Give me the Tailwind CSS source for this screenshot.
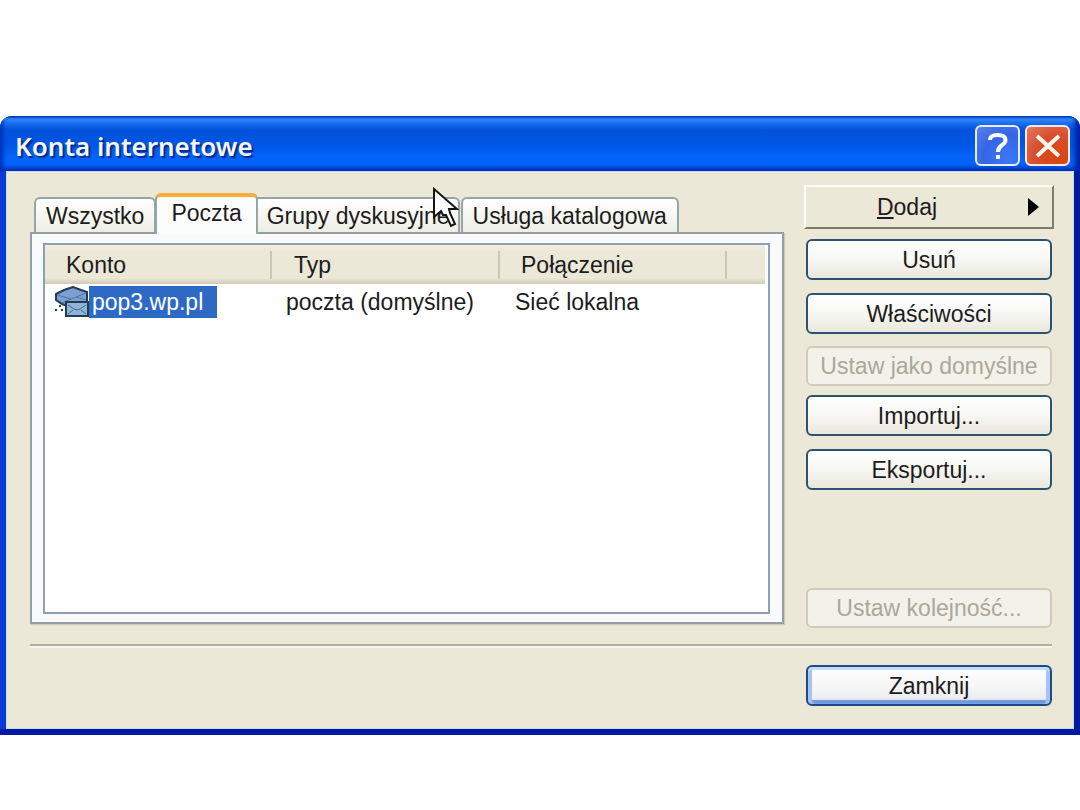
<!DOCTYPE html>
<html lang="pl">
<head>
<meta charset="utf-8">
<meta name="viewport" content="width=device-width, initial-scale=1">
<title>Konta internetowe</title>
<script src="https://cdn.jsdelivr.net/npm/@tailwindcss/browser@4"></script>
</head>
<body class="bg-white pt-[116px] font-['Liberation_Sans',Arial,sans-serif] text-[23px] leading-7 text-[#1c1c20]">
<main class="w-full overflow-hidden rounded-t-[12px] bg-[linear-gradient(90deg,#0a3ad6_0%,#0a3ad6_50%,#001a9c_50%)]">
  <header class="flex h-[55px] items-center justify-between bg-[linear-gradient(180deg,#0a50d8_0%,#3d95ff_5%,#1a72f5_12%,#0553dd_24%,#0055e2_50%,#0364fb_75%,#0362fa_88%,#0148d0_96%,#0538b0_100%)] pt-1 pr-[10px] pl-[15px] shadow-[inset_3px_0_4px_#0030b8,inset_-5px_0_5px_#0022a0]">
    <h1 class="font-['Noto_Sans','Open_Sans',sans-serif] text-[26px] leading-8 font-semibold text-[#f4f6ff] [text-shadow:2px_2px_1px_#0a2a8c]">Konta internetowe</h1>
    <div class="flex gap-[5px]">
      <button aria-label="Pomoc" class="flex h-[41px] w-[45px] items-center justify-center rounded-[6px] border-2 border-[#e8eeff] bg-[radial-gradient(circle_at_75%_85%,#3a78f8,#3565e6_55%,#5b80ea)]">
        <svg class="h-[30px] w-[26px]" viewBox="0 0 26 30" fill="none" stroke="#fff" stroke-width="4"><path d="M5 9Q5 4 12.500 4Q20.500 4 20.500 9Q20.500 12 16.500 14.500Q13 17 13 21"/><path d="M11 26H15"/></svg>
      </button>
      <button aria-label="Zamknij okno" class="flex h-[41px] w-[45px] items-center justify-center rounded-[6px] border-2 border-[#ffe9e2] bg-[radial-gradient(circle_at_75%_85%,#d84510,#d84f2c_55%,#e27a60)]">
        <svg class="h-[26px] w-[28px]" viewBox="0 0 28 26" fill="none" stroke="#fff6ee" stroke-width="4"><path d="M3 3L25 23M25 3L3 23"/></svg>
      </button>
    </div>
  </header>

  <div class="mx-[6px] bg-[#ebe8d7] pr-[22px] pb-[23px] pl-6 shadow-[inset_1px_1px_0_#c9daf5,inset_-1px_-1px_0_#c9daf5]">
    <div class="flex gap-[22px]">
      <section class="flex min-w-0 flex-1 flex-col pt-[22px] pb-1">
        <div role="tablist" class="flex items-end pl-1">
          <button role="tab" class="h-[35px] rounded-t-[6px] border-2 border-b-0 border-[#97a5a8] bg-linear-to-b from-white to-[#efeee4] px-[10px] whitespace-nowrap">Wszystko</button>
          <button role="tab" aria-selected="true" class="relative z-10 -mb-[2px] -ml-[1px] h-[41px] rounded-t-[6px] border-x-2 border-t-[4px] border-x-[#97a5a8] border-t-[#f5ad3c] bg-[#fbfcfc] px-[14px] pb-[6px] whitespace-nowrap">Poczta</button>
          <button role="tab" class="relative h-[35px] rounded-tr-[6px] border-t-2 border-r-2 border-[#97a5a8] bg-linear-to-b from-white to-[#efeee4] pr-[8px] pl-[9px] whitespace-nowrap">Grupy dyskusyjne
            <svg class="absolute -top-[12px] -right-[1px] z-20 h-[42px] w-[27px]" viewBox="0 0 27 42" aria-hidden="true"><path d="M2 2V30L9 24L11 28H14L19 39L23 37L18 26L17 22H25Z" fill="#fff" stroke="#151515" stroke-width="2"/></svg>
          </button>
          <button role="tab" class="ml-[1px] h-[35px] rounded-t-[6px] border-2 border-b-0 border-[#97a5a8] bg-linear-to-b from-white to-[#efeee4] px-[10px] whitespace-nowrap">Usługa katalogowa</button>
        </div>
        <div role="tabpanel" class="flex flex-1 border-2 border-[#959ea4] bg-[#f9fafb] pt-[9px] pr-3 pb-2 pl-[11px] shadow-[1px_1px_1px_#cfcbb9]">
          <div class="min-w-0 flex-1 border-2 border-[#8f9fb4] bg-white pr-[3px]">
            <table class="w-full table-fixed border-collapse text-left">
              <colgroup><col class="w-[227px]"><col class="w-[228px]"><col class="w-[227px]"><col></colgroup>
              <thead>
                <tr class="h-[39px] bg-[linear-gradient(180deg,#f0eee2_0%,#ebe8d7_15%,#ebe8d7_85%,#cfcab6_100%)]">
                  <th scope="col" class="p-0 font-normal"><div class="border-r-2 border-[#cbc7b5] pl-[21px]">Konto</div></th>
                  <th scope="col" class="p-0 font-normal"><div class="border-r-2 border-[#cbc7b5] pl-[22px]">Typ</div></th>
                  <th scope="col" class="p-0 font-normal"><div class="border-r-2 border-[#cbc7b5] pl-[21px]">Połączenie</div></th>
                  <td class="p-0"></td>
                </tr>
              </thead>
              <tbody>
                <tr class="h-[36px]">
                  <td class="p-0 pl-[9px]">
                    <div class="flex items-center">
                      <svg class="h-[32px] w-[35px] flex-none" viewBox="0 0 35 32" fill="#7ba0cf" stroke="#243c52" stroke-width="2" aria-hidden="true"><path d="M2 8L10 4L19 1L27 4L33 6V17L13 20L8 18L2 14Z"/><path d="M3 9L17 13L32 7M17 13L8 17M22 11L32 14" fill="none" stroke="#4c76a6" stroke-width="1"/><path d="M12 16H34V30H12Z" fill="#8eb4d6"/><path d="M14 19L20 23L23 24L26 23L32 19M14 28L19 24M32 28L27 24" fill="none" stroke="#44698c" stroke-width="1"/><path d="M1 24H3M5 20H7M7 24H9" fill="none"/></svg>
                      <span class="h-[32px] bg-[#2f69c6] pr-[14px] pl-[3px] leading-8 text-white">pop3.wp.pl</span>
                    </div>
                  </td>
                  <td class="p-0 pl-[14px] whitespace-nowrap">poczta (domyślne)</td>
                  <td class="p-0 pl-[15px] whitespace-nowrap">Sieć lokalna</td>
                  <td class="p-0"></td>
                </tr>
              </tbody>
            </table>
          </div>
        </div>
      </section>

      <aside class="flex w-[246px] flex-none flex-col pt-[14px]">
        <button class="-mx-[2px] mb-[10px] grid h-[44px] grid-cols-[1fr_auto] items-center border-2 border-t-[#fffef8] border-r-[#7f7c6c] border-b-[#7f7c6c] border-l-[#fffef8] bg-[#ebe8d7] pr-[13px]">
          <span class="pr-[20px]"><span class="underline underline-offset-2">D</span>odaj</span>
          <svg class="h-[18px] w-[11px]" viewBox="0 0 11 18" aria-hidden="true"><path d="M0 0L11 9L0 18Z" fill="#000"/></svg>
        </button>
        <button class="mb-[13px] h-[41px] rounded-[6px] border-2 border-[#2c5272] bg-linear-to-b from-white via-[#f7f7f4] to-[#e9e7dc]">Usuń</button>
        <button class="mb-[12px] h-[41px] rounded-[6px] border-2 border-[#2c5272] bg-linear-to-b from-white via-[#f7f7f4] to-[#e9e7dc]">Właściwości</button>
        <button disabled class="mb-[9px] h-[40px] rounded-[6px] border-2 border-[#cfccbd] bg-[#f3f2e8] whitespace-nowrap text-[#a9a89b]">Ustaw jako domyślne</button>
        <button class="mb-[13px] h-[41px] rounded-[6px] border-2 border-[#2c5272] bg-linear-to-b from-white via-[#f7f7f4] to-[#e9e7dc]">Importuj...</button>
        <button class="mb-[98px] h-[41px] rounded-[6px] border-2 border-[#2c5272] bg-linear-to-b from-white via-[#f7f7f4] to-[#e9e7dc]">Eksportuj...</button>
        <button disabled class="h-[40px] rounded-[6px] border-2 border-[#cfccbd] bg-[#f3f2e8] whitespace-nowrap text-[#a9a89b]">Ustaw kolejność...</button>
      </aside>
    </div>
    <hr class="mt-4 h-[4px] border-t-2 border-b-2 border-t-[#b3afa2] border-b-[#f8f7ee]">
    <footer class="flex justify-end pt-[17px]">
      <button class="h-[41px] w-[246px] rounded-[6px] border-2 border-[#204a80] bg-linear-to-b from-white via-[#f7f7f6] to-[#e6e8ec] shadow-[inset_0_3px_1px_#c3daff,inset_4px_0_1px_#a4c3f2,inset_-4px_0_1px_#a4c3f2,inset_0_-4px_1px_#6f98dd]">Zamknij</button>
    </footer>
  </div>
  <div class="h-[6px] bg-[#0018a4]"></div>
</main>
</body>
</html>
